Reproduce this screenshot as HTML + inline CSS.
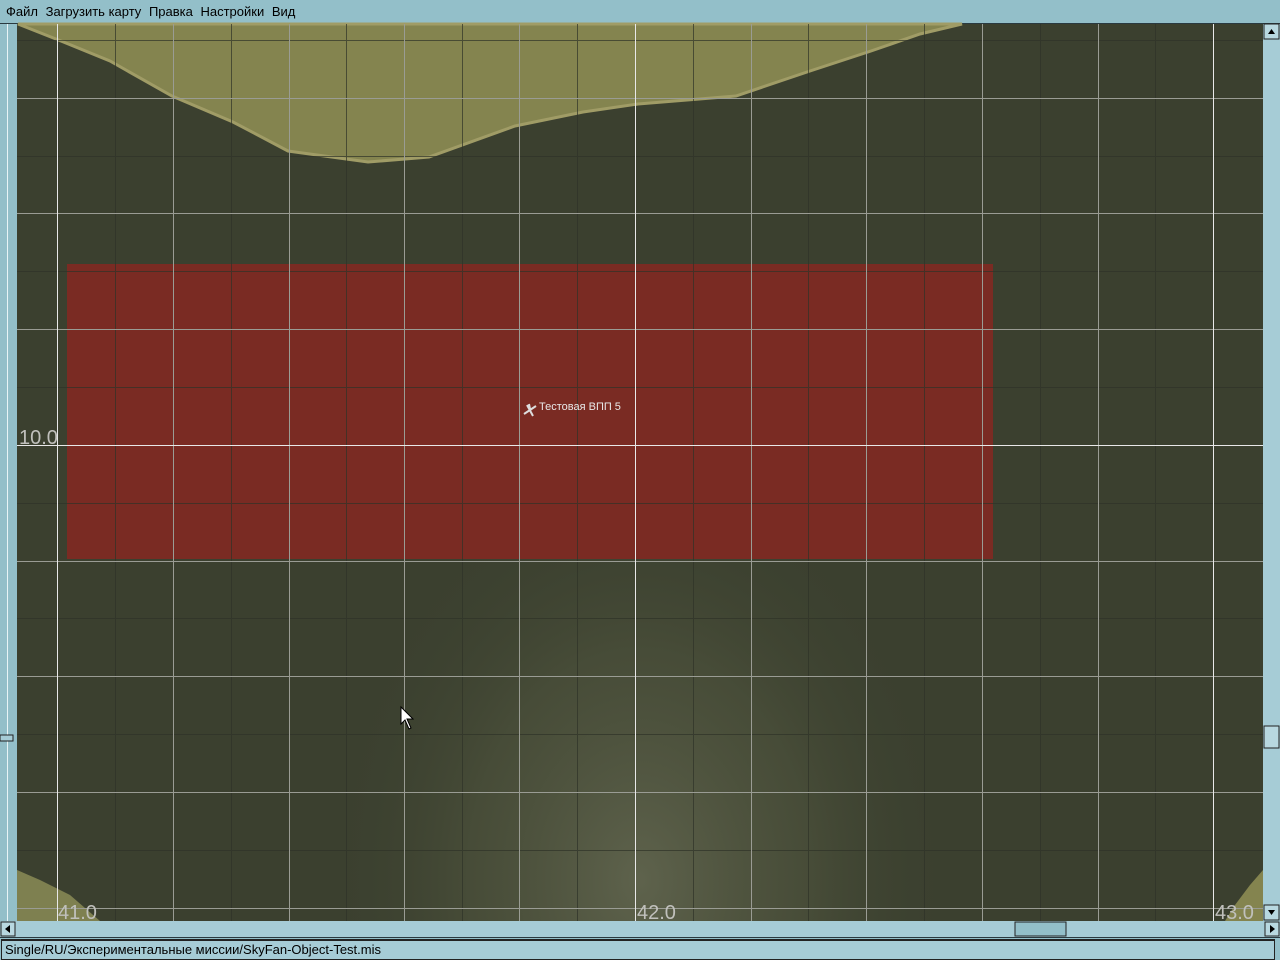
<!DOCTYPE html>
<html><head><meta charset="utf-8"><style>
html,body{margin:0;padding:0;width:1280px;height:960px;overflow:hidden;background:#93bfc9;font-family:"Liberation Sans",sans-serif}
#menu{position:absolute;left:0;top:0;width:1280px;height:23px;background:#93bfc9;border-bottom:1px solid #2a3a40;font-size:13px;line-height:23px}
#menu span{margin-left:6px;margin-right:-2px}
#status{position:absolute;left:1px;top:939px;width:1274px;border:1px solid #222;border-top:2px solid #222;background:#a6ccd6;font-size:13px;line-height:18px;padding-left:3px;box-sizing:border-box;height:21px}
</style></head><body>
<div id="menu"><span>Файл</span> <span>Загрузить карту</span> <span>Правка</span> <span>Настройки</span> <span>Вид</span></div>
<svg width="1280" height="960" style="position:absolute;left:0;top:0" xmlns="http://www.w3.org/2000/svg">
<defs>
<radialGradient id="gl" cx="640" cy="880" r="420" gradientUnits="userSpaceOnUse" gradientTransform="translate(640 880) scale(0.75 1) translate(-640 -880)">
<stop offset="0" stop-color="#6a6e56" stop-opacity="0.75"/>
<stop offset="0.55" stop-color="#555a42" stop-opacity="0.45"/>
<stop offset="1" stop-color="#3b402f" stop-opacity="0"/>
</radialGradient>
</defs>
<rect x="0" y="24" width="17" height="897" fill="#93bfc9"/>
<line x1="7.5" y1="24" x2="7.5" y2="921" stroke="#e8f4f6" stroke-width="1"/>
<rect x="0" y="735" width="13" height="6" fill="#a6ccd6" stroke="#222" stroke-width="1"/>
<rect x="17" y="24" width="1246" height="897" fill="#3b402f"/>
<rect x="17" y="440" width="1246" height="481" fill="url(#gl)"/>
<polygon points="18,24 61,41 110,61 172,96 233,122 288,151 368,162 429,157 515,126 583,112 638,104 736,96 810,71 871,51 920,34 962,24" fill="#84844f" stroke="#a09c66" stroke-width="3"/>
<polygon points="17,870 40,880 70,895 100,921 17,921" fill="#7e8050"/>
<polygon points="1263,870 1250,885 1235,905 1225,921 1263,921" fill="#84844f"/>
<rect x="67" y="264" width="926" height="295" fill="#7a2b23"/>
<g stroke="#2f3328" stroke-width="1" opacity="0.7">
<line x1="115.5" y1="24" x2="115.5" y2="921"/><line x1="231.5" y1="24" x2="231.5" y2="921"/><line x1="346.5" y1="24" x2="346.5" y2="921"/><line x1="462.5" y1="24" x2="462.5" y2="921"/><line x1="577.5" y1="24" x2="577.5" y2="921"/><line x1="693.5" y1="24" x2="693.5" y2="921"/><line x1="808.5" y1="24" x2="808.5" y2="921"/><line x1="924.5" y1="24" x2="924.5" y2="921"/><line x1="1040.5" y1="24" x2="1040.5" y2="921"/><line x1="1155.5" y1="24" x2="1155.5" y2="921"/>
<line x1="17" y1="40.5" x2="1263" y2="40.5"/><line x1="17" y1="156.5" x2="1263" y2="156.5"/><line x1="17" y1="271.5" x2="1263" y2="271.5"/><line x1="17" y1="387.5" x2="1263" y2="387.5"/><line x1="17" y1="503.5" x2="1263" y2="503.5"/><line x1="17" y1="618.5" x2="1263" y2="618.5"/><line x1="17" y1="734.5" x2="1263" y2="734.5"/><line x1="17" y1="850.5" x2="1263" y2="850.5"/>
</g>
<g stroke="#9a9c94" stroke-width="1">
<line x1="173.5" y1="24" x2="173.5" y2="921"/><line x1="289.5" y1="24" x2="289.5" y2="921"/><line x1="404.5" y1="24" x2="404.5" y2="921"/><line x1="519.5" y1="24" x2="519.5" y2="921"/><line x1="751.5" y1="24" x2="751.5" y2="921"/><line x1="866.5" y1="24" x2="866.5" y2="921"/><line x1="982.5" y1="24" x2="982.5" y2="921"/><line x1="1098.5" y1="24" x2="1098.5" y2="921"/>
<line x1="17" y1="98.5" x2="1263" y2="98.5"/><line x1="17" y1="213.5" x2="1263" y2="213.5"/><line x1="17" y1="329.5" x2="1263" y2="329.5"/><line x1="17" y1="561.5" x2="1263" y2="561.5"/><line x1="17" y1="676.5" x2="1263" y2="676.5"/><line x1="17" y1="792.5" x2="1263" y2="792.5"/><line x1="17" y1="908.5" x2="1263" y2="908.5"/>
</g>
<g stroke="#e8e8e8" stroke-width="1">
<line x1="57.5" y1="24" x2="57.5" y2="921"/><line x1="635.5" y1="24" x2="635.5" y2="921"/><line x1="1213.5" y1="24" x2="1213.5" y2="921"/>
<line x1="17" y1="445.5" x2="1263" y2="445.5"/>
</g>
<g fill="#c0c0bc" font-family="Liberation Sans, sans-serif" font-size="20">
<text x="19" y="444">10.0</text><text x="58" y="919">41.0</text><text x="637" y="919">42.0</text><text x="1215" y="919">43.0</text>
</g>
<path d="M524,414 L536,406 M527,405 L533,416 M529,404 L530,409" stroke="#ddd" stroke-width="2" fill="none"/>
<text x="539" y="410" fill="#e8e8e8" font-family="Liberation Sans, sans-serif" font-size="11">Тестовая ВПП 5</text>
<path d="M401,707 L401,724 L405,720 L409,729 L411,728 L407,719 L413,719 Z" fill="#fff" stroke="#000" stroke-width="1"/>
<rect x="1263" y="24" width="17" height="897" fill="#a6ccd6"/>
<rect x="1264" y="24" width="15" height="15" fill="#b8d8e0" stroke="#222"/>
<path d="M1268,34 L1275,34 L1271.5,29 Z" fill="#000"/>
<rect x="1264" y="726" width="15" height="22" fill="#b8d8e0" stroke="#222"/>
<rect x="1264" y="905" width="15" height="15" fill="#b8d8e0" stroke="#222"/>
<path d="M1268,910 L1275,910 L1271.5,915 Z" fill="#000"/>
<rect x="0" y="921" width="1280" height="17" fill="#a6ccd6"/>
<line x1="0" y1="937.5" x2="1280" y2="937.5" stroke="#2a3a40"/>
<rect x="1" y="922" width="14" height="14" fill="#b8d8e0" stroke="#222"/>
<path d="M10,925 L10,933 L5,929 Z" fill="#000"/>
<rect x="1015" y="922" width="51" height="14" fill="#93bfc9" stroke="#222"/>
<rect x="1265" y="922" width="14" height="14" fill="#b8d8e0" stroke="#222"/>
<path d="M1270,925 L1270,933 L1275,929 Z" fill="#000"/>
</svg>
<div id="status">Single/RU/Экспериментальные миссии/SkyFan-Object-Test.mis</div>
</body></html>
